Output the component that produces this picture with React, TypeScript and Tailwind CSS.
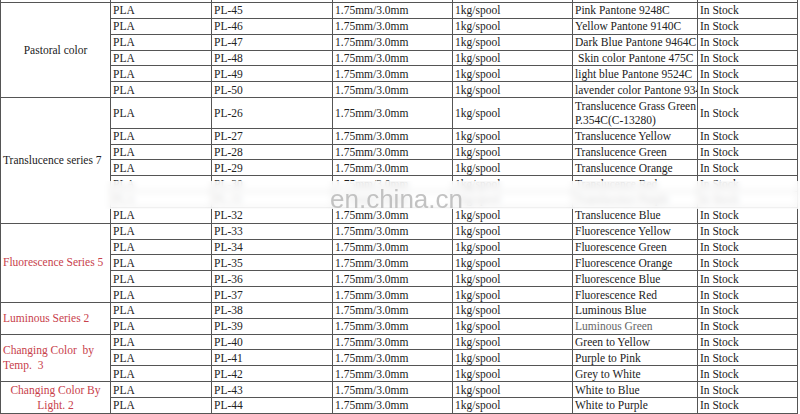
import React from "react";

type Row = { code: string; color: React.ReactNode; tall?: boolean; gray?: boolean; indent?: boolean };
type Group = { label: React.ReactNode; align: "center" | "left"; red: boolean; rows: Row[] };

const groups: Group[] = [
  {
    label: "Pastoral color",
    align: "center",
    red: false,
    rows: [
      { code: "PL-45", color: "Pink Pantone 9248C" },
      { code: "PL-46", color: "Yellow Pantone 9140C" },
      { code: "PL-47", color: "Dark Blue Pantone 9464C" },
      { code: "PL-48", color: "Skin color Pantone 475C", indent: true },
      { code: "PL-49", color: "light blue Pantone 9524C" },
      { code: "PL-50", color: "lavender color Pantone 9344C" },
    ],
  },
  {
    label: "Translucence series 7",
    align: "left",
    red: false,
    rows: [
      {
        code: "PL-26",
        color: (
          <>
            Translucence Grass Green
            <br />
            P.354C(C-13280)
          </>
        ),
        tall: true,
      },
      { code: "PL-27", color: "Translucence Yellow" },
      { code: "PL-28", color: "Translucence Green" },
      { code: "PL-29", color: "Translucence Orange" },
      { code: "PL-30", color: "Translucence Red" },
      { code: "PL-31", color: "Translucence Purple" },
      { code: "PL-32", color: "Translucence Blue" },
    ],
  },
  {
    label: "Fluorescence Series 5",
    align: "left",
    red: true,
    rows: [
      { code: "PL-33", color: "Fluorescence Yellow" },
      { code: "PL-34", color: "Fluorescence Green" },
      { code: "PL-35", color: "Fluorescence Orange" },
      { code: "PL-36", color: "Fluorescence Blue" },
      { code: "PL-37", color: "Fluorescence Red" },
    ],
  },
  {
    label: "Luminous Series 2",
    align: "left",
    red: true,
    rows: [
      { code: "PL-38", color: "Luminous Blue" },
      { code: "PL-39", color: "Luminous Green", gray: true },
    ],
  },
  {
    label: (
      <>
        Changing Color&nbsp; by
        <br />
        Temp.&nbsp; 3
      </>
    ),
    align: "left",
    red: true,
    rows: [
      { code: "PL-40", color: "Green to Yellow" },
      { code: "PL-41", color: "Purple to Pink" },
      { code: "PL-42", color: "Grey to White" },
    ],
  },
  {
    label: (
      <>
        Changing Color By
        <br />
        Light. 2
      </>
    ),
    align: "center",
    red: true,
    rows: [
      { code: "PL-43", color: "White to Blue" },
      { code: "PL-44", color: "White to Purple" },
    ],
  },
];

const cell = "border border-[#555] px-[2px] py-0 whitespace-nowrap overflow-hidden align-middle text-left";

export default function App() {
  return (
    <div
      className="relative w-[800px] h-[414px] overflow-hidden bg-white text-[#222] text-[11.5px] leading-[14px]"
      style={{ fontFamily: '"Liberation Serif", "Times New Roman", serif' }}
    >
      <table className="table-fixed border-collapse w-[797px]">
        <colgroup>
          <col className="w-[110px]" />
          <col className="w-[101px]" />
          <col className="w-[121px]" />
          <col className="w-[120px]" />
          <col className="w-[120px]" />
          <col className="w-[125px]" />
          <col className="w-[100px]" />
        </colgroup>
        <tbody>
          <tr className="h-[2.5px]">
            {[0, 1, 2, 3, 4, 5, 6].map((i) => (
              <td key={i} className="border-x border-t-0 border-b border-[#555] p-0 h-[2.5px] text-[0px] leading-[0]"></td>
            ))}
          </tr>
          {groups.map((g, gi) =>
            g.rows.map((r, ri) => (
              <tr key={`${gi}-${ri}`} className={r.tall ? "h-[30.6px]" : "h-[15.85px]"}>
                {ri === 0 && (
                  <td
                    rowSpan={g.rows.length}
                    className={`border border-[#555] px-[2px] py-0 align-middle whitespace-normal leading-[15px] ${
                      g.align === "center" ? "text-center" : "text-left"
                    } ${g.red ? "text-[#c8414b]" : "text-[#222]"}`}
                  >
                    {g.label}
                  </td>
                )}
                <td className={cell}>PLA</td>
                <td className={cell}>{r.code}</td>
                <td className={cell}>1.75mm/3.0mm</td>
                <td className={cell}>1kg/spool</td>
                <td className={`${cell} ${r.gray ? "text-[#666]" : ""} ${r.indent ? "pl-[5px]" : ""}`}>{r.color}</td>
                <td className={cell}>In Stock</td>
              </tr>
            ))
          )}
        </tbody>
      </table>
      <div className="absolute left-[104px] right-0 top-[181px] h-[28px] bg-white/80 backdrop-blur-[3px]"></div>
      <div
        className="absolute left-[330px] top-[184px] text-[26px] leading-[30px] text-[#c2c2c2]"
        style={{ fontFamily: '"Liberation Sans", Arial, sans-serif' }}
      >
        en.china.cn
      </div>
    </div>
  );
}
